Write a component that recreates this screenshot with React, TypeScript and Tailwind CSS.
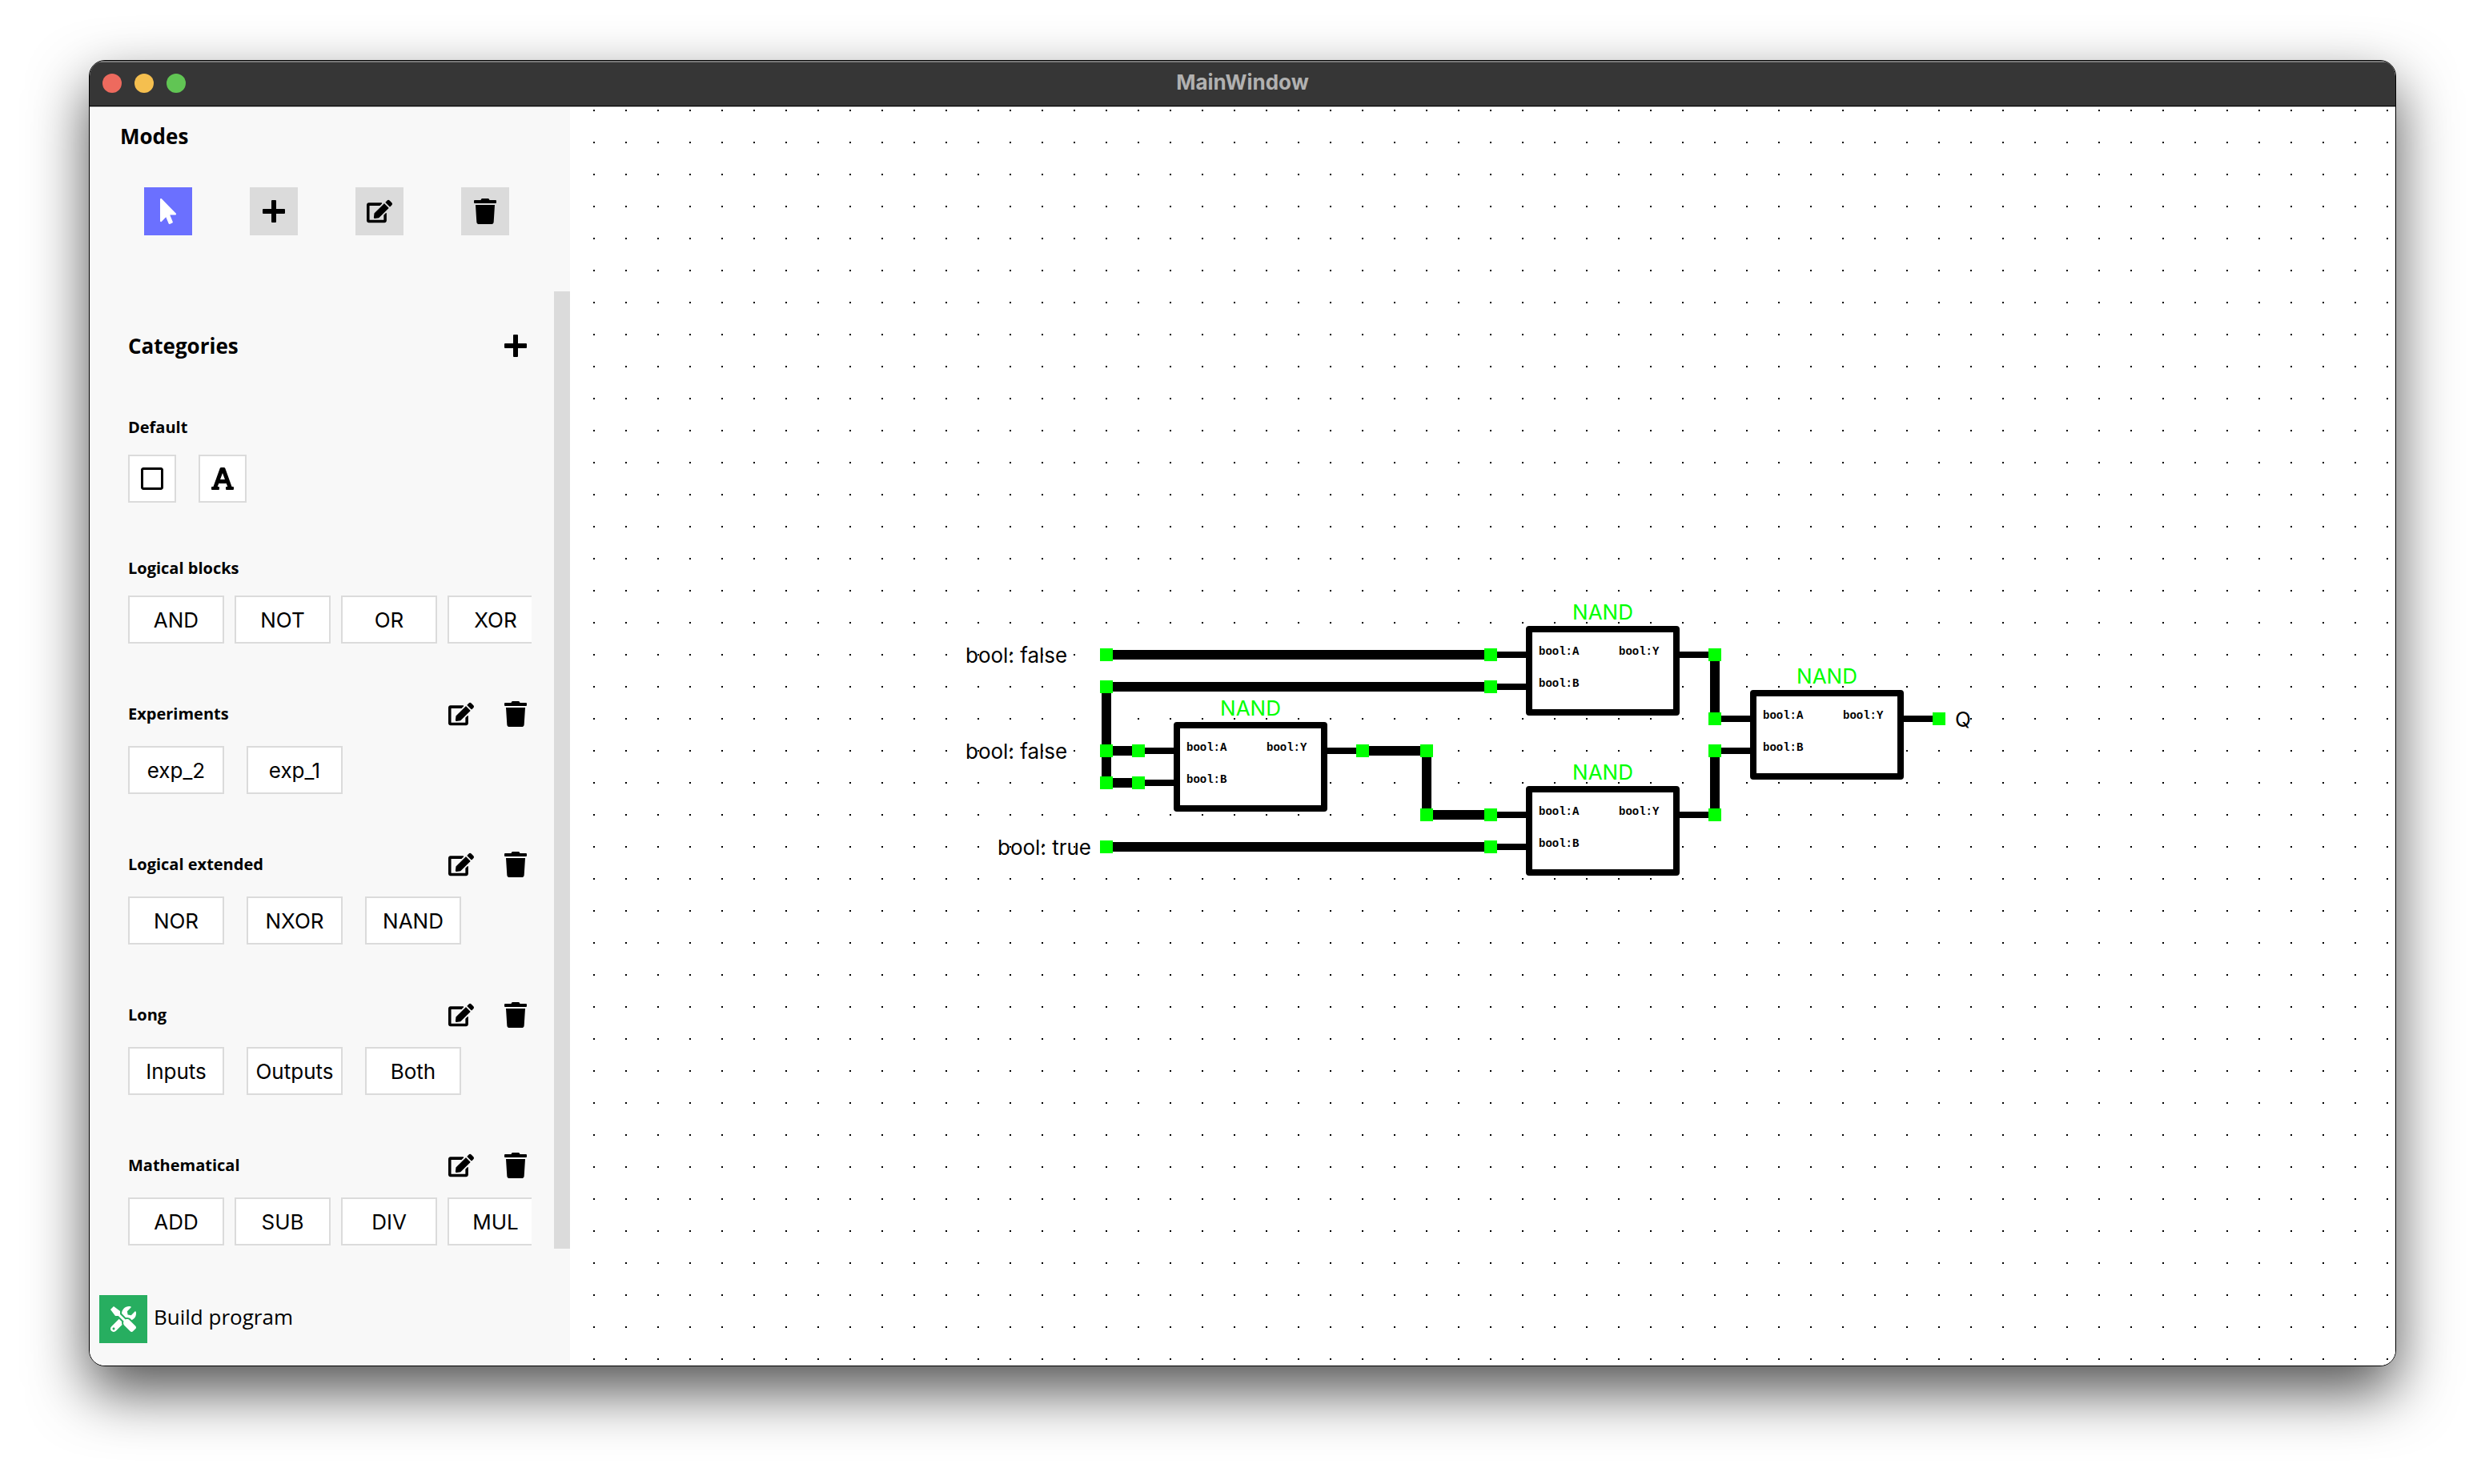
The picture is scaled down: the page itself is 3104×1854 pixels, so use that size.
import React from "react";
import { FaEdit, FaFont, FaMousePointer, FaTools, FaTrash, FaRegSquare } from "react-icons/fa";

const UI = "font-[Inter,'Liberation_Sans',sans-serif]";
const HEAD = "font-['Open_Sans',sans-serif]";

function Plus() {
  return (
    <svg viewBox="0 0 32 32" className="size-8" aria-hidden="true">
      <rect x="2" y="13" width="28" height="6" rx="1" />
      <rect x="13" y="2" width="6" height="28" rx="1" />
    </svg>
  );
}

function Header({ title, editable }: { title: string; editable?: boolean }) {
  return (
    <div className="flex items-center gap-7">
      <h3 className={`${HEAD} flex-1 text-[20px] leading-7 font-bold`}>{title}</h3>
      {editable && (
        <>
          <button aria-label={`Edit ${title}`} className="grid size-10 place-items-center">
            <FaEdit className="size-8" />
          </button>
          <button aria-label={`Delete ${title}`} className="grid size-10 place-items-center">
            <FaTrash className="size-8" />
          </button>
        </>
      )}
    </div>
  );
}

const groups = [
  { title: "Logical blocks", items: ["AND", "NOT", "OR", "XOR"], editable: false },
  { title: "Experiments", items: ["exp_2", "exp_1"], editable: true },
  { title: "Logical extended", items: ["NOR", "NXOR", "NAND"], editable: true },
  { title: "Long", items: ["Inputs", "Outputs", "Both"], editable: true },
  { title: "Mathematical", items: ["ADD", "SUB", "DIV", "MUL"], editable: true },
];

const tile = "grid h-15 shrink-0 place-items-center border-2 border-[#dbdbdb] bg-white";

function Sidebar() {
  const mode = "grid size-15 place-items-center";
  return (
    <aside className="flex w-[600px] shrink-0 flex-col bg-[#f8f8f8] text-black">
      <div className="px-[38px] pt-[18px]">
        <h2 className={`${HEAD} text-[26px] leading-9 font-bold`}>Modes</h2>
      </div>
      <div className="mt-[46px] flex gap-18 px-17">
        <button aria-label="Select" className={`${mode} bg-[#6b70ff] text-white`}>
          <FaMousePointer className="size-8" />
        </button>
        <button aria-label="Add" className={`${mode} bg-[#dbdbdb]`}>
          <Plus />
        </button>
        <button aria-label="Edit" className={`${mode} bg-[#dbdbdb]`}>
          <FaEdit className="size-8" />
        </button>
        <button aria-label="Delete" className={`${mode} bg-[#dbdbdb]`}>
          <FaTrash className="size-8" />
        </button>
      </div>
      <div className="mt-[70px] flex">
        <div className="flex min-w-0 flex-1 flex-col gap-17 pt-12 pr-7 pb-1 pl-12">
          <div className="flex items-center justify-between">
            <h2 className={`${HEAD} text-[26px] leading-10 font-bold`}>Categories</h2>
            <button aria-label="Add category" className="grid size-10 place-items-center">
              <Plus />
            </button>
          </div>
          <section className="flex flex-col gap-5">
            <Header title="Default" />
            <div className="flex gap-7">
              <button aria-label="Block" className={`${tile} w-15`}>
                <FaRegSquare className="size-8" />
              </button>
              <button aria-label="Text" className={`${tile} w-15`}>
                <FaFont className="size-8" />
              </button>
            </div>
          </section>
          {groups.map((g) => (
            <section key={g.title} className="flex flex-col gap-5">
              <Header title={g.title} editable={g.editable} />
              <div className={`flex overflow-hidden ${g.items.length > 3 ? "gap-[13px]" : "gap-7"}`}>
                {g.items.map((i) => (
                  <button key={i} className={`${tile} ${UI} w-30 pt-0.5 text-[26px] leading-8`}>
                    {i}
                  </button>
                ))}
              </div>
            </section>
          ))}
        </div>
        <div className="w-5 bg-[#dbdbdb]" />
      </div>
      <div className="mt-auto px-3 pb-7">
        <button className={`${HEAD} flex items-center gap-2 text-[26px] leading-9`}>
          <span className="grid size-15 place-items-center bg-[#27ae60] text-white">
            <FaTools className="size-8" />
          </span>
          <span className="pb-1.5">Build program</span>
        </button>
      </div>
    </aside>
  );
}

const GREEN = "#00ff00";
/* Diagram coordinates are in canvas pixels; the grid step is 40. */
const gates = [
  [1194, 652],
  [754, 772],
  [1194, 852],
  [1474, 732],
];
const wires = [
  "M670 684H1150", "M670 724H1150", "M670 804H710", "M670 844H710",
  "M990 804H1070", "M1070 884H1150", "M670 924H1150",
  "M670 724V844", "M1070 804V884", "M1430 684V764", "M1430 804V884",
];
const pins = [
  [670, 684], [670, 724], [670, 804], [670, 844], [670, 924],
  [710, 804], [710, 844], [990, 804], [1070, 804], [1070, 884],
  [1150, 684], [1150, 724], [1150, 884], [1150, 924],
  [1430, 684], [1430, 764], [1430, 804], [1430, 884], [1710, 764],
];
const labels: [number, number, string][] = [
  [494, 694, "bool: false"],
  [494, 814, "bool: false"],
  [534, 934, "bool: true"],
  [1730, 774, "Q"],
];

function Canvas() {
  return (
    <main className="min-w-0 flex-1 bg-white">
      <svg className="block h-full w-full" role="img" aria-label="Logic diagram">
        <defs>
          <pattern id="dots" x="10" y="-16" width="40" height="40" patternUnits="userSpaceOnUse">
            <rect x="19" y="19" width="2" height="2" />
          </pattern>
        </defs>
        <rect width="100%" height="100%" fill="url(#dots)" />
        {wires.map((d) => (
          <path key={d} d={d} stroke="#000" strokeWidth="12" />
        ))}
        {gates.map(([x, y]) => (
          <g key={`${x}-${y}`}>
            <path
              d={`M${x - 44} ${y + 32}H${x + 24}M${x - 44} ${y + 72}H${x + 24}M${x + 184} ${y + 32}H${x + 236}`}
              stroke="#000"
              strokeWidth="8"
            />
            <rect x={x + 4} y={y} width="184" height="104" fill="#fff" stroke="#000" strokeWidth="8" strokeLinejoin="round" />
            <text x={x + 96} y={y - 12} textAnchor="middle" fill={GREEN} className={`${UI} text-[26px]`}>
              NAND
            </text>
            <g className="font-['Liberation_Mono',monospace] text-[14px] font-bold">
              <text x={x + 16} y={y + 32}>bool:A</text>
              <text x={x + 16} y={y + 72}>bool:B</text>
              <text x={x + 116} y={y + 32}>bool:Y</text>
            </g>
          </g>
        ))}
        {pins.map(([x, y]) => (
          <rect key={`${x}-${y}`} x={x - 8} y={y - 8} width="16" height="16" fill={GREEN} />
        ))}
        {labels.map(([x, y, t]) => (
          <text key={`${x}-${y}`} x={x} y={y} className={`${UI} text-[26px]`}>
            {t}
          </text>
        ))}
      </svg>
    </main>
  );
}

export default function App() {
  return (
    <div className="flex min-h-screen bg-white px-[111px] pt-[75px] pb-[147px]">
      <div className="flex flex-1 flex-col overflow-hidden rounded-[20px] border border-black bg-white shadow-[0_31px_72px_rgba(0,0,0,0.68)]">
        <header className="relative flex h-[57px] items-center justify-center border-t-2 border-b border-t-[#777] border-b-black bg-[#363636] pb-0.5">
          <div className="absolute left-4 flex gap-4">
            <button aria-label="Close" className="size-6 rounded-full bg-[#ed6a5e]" />
            <button aria-label="Minimise" className="size-6 rounded-full bg-[#f5bf4f]" />
            <button aria-label="Zoom" className="size-6 rounded-full bg-[#61c554]" />
          </div>
          <h1 className={`${UI} pb-0.5 text-[26px] leading-8 font-bold text-[#b1b1b1]`}>MainWindow</h1>
        </header>
        <div className="flex flex-1 border-t border-[#c4c4c4]">
          <Sidebar />
          <Canvas />
        </div>
      </div>
    </div>
  );
}
